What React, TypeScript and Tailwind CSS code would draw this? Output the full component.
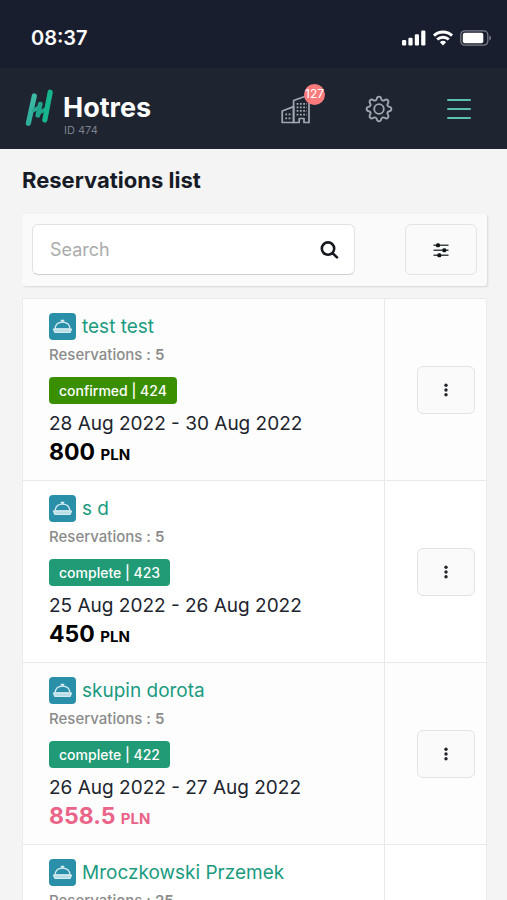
import React, { useState } from "react";

type Reservation = {
  id: number;
  guest: string;
  count: number;
  status: "confirmed" | "complete";
  dates: string;
  price: string;
  unpaid?: boolean;
};

const reservations: Reservation[] = [
  { id: 424, guest: "test test", count: 5, status: "confirmed", dates: "28 Aug 2022 - 30 Aug 2022", price: "800" },
  { id: 423, guest: "s d", count: 5, status: "complete", dates: "25 Aug 2022 - 26 Aug 2022", price: "450" },
  { id: 422, guest: "skupin dorota", count: 5, status: "complete", dates: "26 Aug 2022 - 27 Aug 2022", price: "858.5", unpaid: true },
  { id: 421, guest: "Mroczkowski Przemek", count: 25, status: "complete", dates: "24 Aug 2022 - 25 Aug 2022", price: "620" },
];

const StatusBar = () => (
  <div className="flex h-[68px] items-center justify-between bg-[#191e2e] pt-2 pr-[15px] pl-[31px] text-white">
    <span className="text-[20px] font-semibold">08:37</span>
    <div className="flex items-center gap-[7px]">
      <svg width="24" height="16" viewBox="0 0 24 16" fill="#fff" aria-hidden="true">
        <rect x="0" y="10" width="4.2" height="5.5" rx="1.2" />
        <rect x="6.4" y="7.8" width="4.2" height="7.7" rx="1.2" />
        <rect x="12.8" y="4.2" width="4.2" height="11.3" rx="1.2" />
        <rect x="19.2" y="0.5" width="4.2" height="15" rx="1.2" />
      </svg>
      <svg width="20" height="16" viewBox="0 0 20 16" fill="none" stroke="#fff" strokeWidth="2.9" aria-hidden="true">
        <path d="M1 5.6 A13 13 0 0 1 19 5.6" />
        <path d="M4.2 9.5 A8.4 8.4 0 0 1 15.8 9.5" />
        <path d="M10 15.4 L6.9 12.3 A4.5 4.5 0 0 1 13.1 12.3 Z" fill="#fff" stroke="none" />
      </svg>
      <svg width="32" height="16" viewBox="0 0 32 16" aria-hidden="true">
        <rect x="0.8" y="0.8" width="27" height="14.4" rx="4" fill="none" stroke="#7d808b" strokeWidth="1.2" />
        <rect x="2.8" y="2.8" width="20.5" height="10.4" rx="2" fill="#fff" />
        <path d="M29.3 5.5 C31.6 6.4 31.6 9.6 29.3 10.5 Z" fill="#7d808b" />
      </svg>
    </div>
  </div>
);

const Logo = () => (
  <svg width="28" height="38" viewBox="0 0 28 38" fill="none" strokeLinecap="round" aria-hidden="true">
    <defs>
      <linearGradient id="logoLeft" x1="0" y1="0" x2="0" y2="1">
        <stop offset="0" stopColor="#3dbba6" />
        <stop offset="1" stopColor="#2fae9c" />
      </linearGradient>
    </defs>
    <path d="M9.3 7 L3.4 34.3" stroke="url(#logoLeft)" strokeWidth="5.2" />
    <path d="M8.4 21.4 L13.4 18.6" stroke="#28a893" strokeWidth="3.6" />
    <path d="M14.2 24 L19.8 20.4" stroke="#1ba489" strokeWidth="3.6" />
    <path d="M15.2 15.2 L12.9 26.2" stroke="#1fa58c" strokeWidth="4.8" />
    <path d="M25.2 3.2 L19.8 31" stroke="#17b58c" strokeWidth="5.2" />
  </svg>
);

const BuildingIcon = () => (
  <svg width="30" height="30" viewBox="0 0 30 30" fill="none" stroke="#a3a8b0" strokeWidth="1.7" strokeLinejoin="round" aria-hidden="true">
    <path d="M1.2 28.5 V17 L12.6 12.6 V28.5 Z" />
    <path d="M12.6 28.5 V6.5 L28 1 V28.5 H23 V24.5 H18.2 V28.5 Z" />
    <g strokeWidth="1.8" strokeDasharray="1.8 1.5">
      <path d="M4.3 20.3 H11" />
      <path d="M4.3 24.3 H11" />
      <path d="M15.6 9.8 H26" />
      <path d="M15.6 13.3 H26" />
      <path d="M15.6 16.8 H26" />
      <path d="M15.6 20.6 H26" />
    </g>
  </svg>
);

const GearIcon = () => (
  <svg width="28" height="28" viewBox="0 0 28 28" fill="none" stroke="#a3a8b0" strokeWidth="1.8" strokeLinejoin="round" aria-hidden="true">
    <path d="M11.6 4.3 Q12 1.6 14 1.6 Q16 1.6 16.4 4.3 Q17.4 6.2 19.1 5.4 Q21.4 3.8 22.8 5.2 Q24.2 6.6 22.6 8.9 Q21.8 10.6 23.7 11.6 Q26.4 12 26.4 14 Q26.4 16 23.7 16.4 Q21.8 17.4 22.6 19.1 Q24.2 21.4 22.8 22.8 Q21.4 24.2 19.1 22.6 Q17.4 21.8 16.4 23.7 Q16 26.4 14 26.4 Q12 26.4 11.6 23.7 Q10.6 21.8 8.9 22.6 Q6.6 24.2 5.2 22.8 Q3.8 21.4 5.4 19.1 Q6.2 17.4 4.3 16.4 Q1.6 16 1.6 14 Q1.6 12 4.3 11.6 Q6.2 10.6 5.4 8.9 Q3.8 6.6 5.2 5.2 Q6.6 3.8 8.9 5.4 Q10.6 6.2 11.6 4.3 Z" />
    <circle cx="14" cy="14" r="4.8" />
  </svg>
);

const Header = () => (
  <header className="flex h-[81px] items-center justify-between bg-[#1e2430] pr-[36px] pl-[25px]">
    <a href="#" className="flex items-start gap-[10px]">
      <span className="pt-[9px]">
        <Logo />
      </span>
      <span className="flex flex-col pt-3">
        <span className="text-[27px] leading-[32px] font-bold text-white">Hotres</span>
        <span className="pl-px text-[11px] leading-[13px] text-[#7c818c]">ID 474</span>
      </span>
    </a>
    <nav className="flex items-center gap-[54px]">
      <button type="button" aria-label="Properties" className="relative">
        <BuildingIcon />
        <span className="absolute -top-[10px] left-[23px] flex size-[21px] items-center justify-center rounded-full bg-[#fb7b7d] text-[12px] text-white">
          127
        </span>
      </button>
      <button type="button" aria-label="Settings">
        <GearIcon />
      </button>
      <button type="button" aria-label="Menu" className="flex h-[22px] w-[24px] flex-col justify-between py-px">
        <span className="h-[2px] w-full rounded-full bg-[#5cc0b0]" />
        <span className="h-[2px] w-full rounded-full bg-[#5cc0b0]" />
        <span className="h-[2px] w-full rounded-full bg-[#5cc0b0]" />
      </button>
    </nav>
  </header>
);

const BellIcon = () => (
  <span className="flex size-[27px] shrink-0 items-center justify-center rounded-[4px] bg-[#2a8fa8]">
    <svg width="21" height="17" viewBox="0 0 21 17" fill="none" stroke="#d3eaf0" strokeWidth="1.3" strokeLinejoin="round" aria-hidden="true">
      <path d="M3 11 C3.4 6.6 6.5 4.2 10.5 4.2 C14.5 4.2 17.6 6.6 18 11 Z" />
      <path d="M1.5 11.2 H19.5 L18 14.4 H3 Z" fill="#b5dbe4" />
      <path d="M8.7 2.6 H12.3 M10.5 2.6 V4.2" strokeWidth="1.8" />
    </svg>
  </span>
);

const SearchPanel = () => {
  const [query, setQuery] = useState("");

  return (
    <form
      onSubmit={(e) => e.preventDefault()}
      className="mt-5 flex justify-between gap-[50px] rounded-[3px] bg-[#fafafa] px-[10px] pt-[10px] pb-[11px] shadow-[1px_1px_2px_rgba(0,0,0,0.12)]"
    >
      <div className="flex h-[51px] min-w-0 flex-1 items-center rounded-[6px] border border-[#e2e2e2] border-b-[#cfcfcf] bg-white pr-[15px] pl-[17px]">
        <input
          type="text"
          aria-label="Search"
          placeholder="Search"
          value={query}
          onChange={(e) => setQuery(e.target.value)}
          className="min-w-0 flex-1 text-[18px] text-[#15181f] outline-none placeholder:text-[#ababab]"
        />
        <button type="submit" aria-label="Search reservations">
          <svg width="19" height="19" viewBox="0 0 19 19" fill="none" stroke="#15181f" strokeWidth="2.6" strokeLinecap="round" aria-hidden="true">
            <circle cx="8" cy="8.6" r="6.2" />
            <path d="M12.8 13.4 L17 17.4" />
          </svg>
        </button>
      </div>
      <button
        type="button"
        aria-label="Filters"
        className="flex h-[51px] w-[72px] shrink-0 items-center justify-center rounded-[6px] border border-[#e3e3e3] bg-[#fafafa]"
      >
        <svg width="16" height="16" viewBox="0 0 16 16" stroke="#3d4647" strokeWidth="1.4" aria-hidden="true">
          <path d="M0.5 3.2 H15.5 M0.5 8.2 H15.5 M0.5 13.2 H15.5" />
          <g fill="#101416" stroke="none">
            <rect x="3" y="1.2" width="4" height="4" rx="1.5" />
            <rect x="9.3" y="6.2" width="4" height="4" rx="1.5" />
            <rect x="4.3" y="11.2" width="4" height="4" rx="1.5" />
          </g>
        </svg>
      </button>
    </form>
  );
};

const ReservationRow = ({ item }: { item: Reservation }) => (
  <tr className="border-t border-[#e9e9e9] odd:bg-[#fdfdfd] even:bg-white">
    <td className="border-r border-[#e9e9e9] pt-[14px] pr-2 pb-[14px] pl-[26px]">
      <div className="flex items-center gap-[6px]">
        <BellIcon />
        <a href="#" className="text-[19px] leading-[27px] text-[#1a9b80]">
          {item.guest}
        </a>
      </div>
      <p className="mt-[5px] text-[15px] leading-[20px] font-medium text-[#8b8b8b]">
        Reservations : <span className="font-semibold">{item.count}</span>
      </p>
      <span
        className={
          item.status === "confirmed"
            ? "mt-3 flex h-[27px] w-fit items-center rounded-[4px] bg-[#3a8f00] px-[10px] text-[14px] font-medium text-white"
            : "mt-3 flex h-[27px] w-fit items-center rounded-[4px] bg-[#219b75] px-[10px] text-[14px] font-medium text-white"
        }
      >
        {item.status} | {item.id}
      </span>
      <p className="mt-[6px] text-[19px] leading-[28px] text-[#20242d]">{item.dates}</p>
      <p className={item.unpaid ? "text-[23px] leading-[28px] font-bold text-[#ea6388]" : "text-[23px] leading-[28px] font-bold text-black"}>
        {item.price} <span className="text-[15px] leading-none">PLN</span>
      </p>
    </td>
    <td className="w-[102px] pl-5 align-middle">
      <button
        type="button"
        aria-label={`Options for ${item.guest}`}
        className="ml-3 flex h-[48px] w-[58px] items-center justify-center rounded-[6px] border border-[#e3e3e3] bg-[#fafafa]"
      >
        <svg width="4" height="14" viewBox="0 0 4 14" fill="#22262b" aria-hidden="true">
          <circle cx="2" cy="2.2" r="1.7" />
          <circle cx="2" cy="7" r="1.7" />
          <circle cx="2" cy="11.8" r="1.7" />
        </svg>
      </button>
    </td>
  </tr>
);

const App = () => {
  return (
    <div className="h-screen overflow-hidden bg-[#f4f4f4] font-['Inter',sans-serif]">
      <StatusBar />
      <Header />
      <main className="pt-[17px] pr-5 pl-[22px]">
        <h1 className="text-[22px] leading-[28px] font-bold text-[#171b26]">Reservations list</h1>
        <SearchPanel />
        <table aria-label="Reservations" className="mt-3 w-full border-collapse border border-[#ececec] text-left">
          <tbody>
            {reservations.map((item) => (
              <ReservationRow key={item.id} item={item} />
            ))}
          </tbody>
        </table>
      </main>
    </div>
  );
};

export default App;
